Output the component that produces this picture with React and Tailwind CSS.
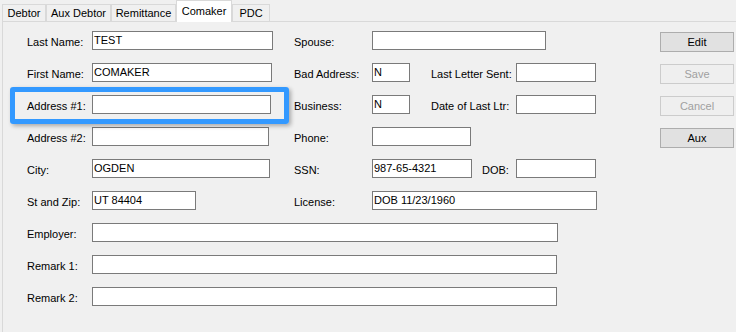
import React from "react";

const TABS = [
  { name: "Debtor", w: "w-[44px]" },
  { name: "Aux Debtor", w: "w-[65px]" },
  { name: "Remittance", w: "w-[65px]" },
  { name: "Comaker", w: "w-[56px]", active: true },
  { name: "PDC", w: "w-[38px]" },
];

// plain winforms-ish textbox
const Box = ({ className = "", value = "" }) => (
  <div
    className={`h-[19px] shrink-0 overflow-hidden whitespace-nowrap border border-[#7a7a7a] bg-white pl-[1px] text-[11px] leading-[17px] text-black ${className}`}
  >
    {value}
  </div>
);

const Label = ({ className = "", children }) => (
  <span className={`shrink-0 whitespace-nowrap leading-[22px] ${className}`}>
    {children}
  </span>
);

const Btn = ({ children, disabled }) => (
  <button
    className={`h-[20px] w-[74px] border text-[11px] leading-[18px] ${
      disabled
        ? "border-[#cccccc] bg-[#efefef] text-[#a0a0a0]"
        : "border-[#adadad] bg-[#e1e1e1] text-black"
    }`}
  >
    {children}
  </button>
);

const App = () => {
  return (
    <div className="relative flex h-[332px] w-[736px] flex-col overflow-hidden bg-[#f0f0f0] font-['Liberation_Sans',Arial,sans-serif] text-[11px] text-black">
      {/* ----- tab strip ----- */}
      <div className="ml-[2px] flex h-[21px] items-end">
        {TABS.map((t) =>
          t.active ? (
            <div
              key={t.name}
              className={`relative z-10 -mb-px flex h-[22px] ${t.w} justify-center border border-b-0 border-[#d9d9d9] bg-white pt-[3px] leading-[14px]`}
            >
              {t.name}
            </div>
          ) : (
            <div
              key={t.name}
              className={`flex h-[17px] ${t.w} items-center justify-center border-l border-t border-r border-[#d9d9d9] bg-[#f0f0f0] pt-[1px]`}
            >
              {t.name}
            </div>
          )
        )}
      </div>

      {/* ----- tab page ----- */}
      <div className="ml-[2px] flex flex-1 justify-between border-l border-t border-[#d9d9d9] bg-[#f0f0f0] pl-[24px] pr-[2px] pt-[9px]">
        <div className="flex flex-col gap-[13px]">
          <div className="flex h-[19px] items-start">
            <div className="flex w-[267px] shrink-0">
              <Label className="w-[65px]">Last Name:</Label>
              <Box className="w-[181px]" value="TEST" />
            </div>
            <Label className="w-[78px]">Spouse:</Label>
            <Box className="w-[174px]" />
          </div>

          <div className="flex h-[19px] items-start">
            <div className="flex w-[267px] shrink-0">
              <Label className="w-[65px]">First Name:</Label>
              <Box className="w-[180px]" value="COMAKER" />
            </div>
            <Label className="w-[78px]">Bad Address:</Label>
            <Box className="w-[38px]" value="N" />
            <Label className="ml-[21px] w-[85px]">Last Letter Sent:</Label>
            <Box className="w-[80px]" />
          </div>

          <div className="flex h-[19px] items-start">
            <div className="flex w-[267px] shrink-0">
              <Label className="w-[65px]">Address #1:</Label>
              <Box className="w-[179px]" />
            </div>
            <Label className="w-[78px]">Business:</Label>
            <Box className="w-[38px]" value="N" />
            <Label className="ml-[21px] w-[85px]">Date of Last Ltr:</Label>
            <Box className="w-[80px]" />
          </div>

          <div className="flex h-[19px] items-start">
            <div className="flex w-[267px] shrink-0">
              <Label className="w-[65px]">Address #2:</Label>
              <Box className="w-[177px]" />
            </div>
            <Label className="w-[78px]">Phone:</Label>
            <Box className="w-[99px]" />
          </div>

          <div className="flex h-[19px] items-start">
            <div className="flex w-[267px] shrink-0">
              <Label className="w-[65px]">City:</Label>
              <Box className="w-[178px]" value="OGDEN" />
            </div>
            <Label className="w-[78px]">SSN:</Label>
            <Box className="w-[100px]" value="987-65-4321" />
            <Label className="ml-[10px] w-[34px]">DOB:</Label>
            <Box className="w-[80px]" />
          </div>

          <div className="flex h-[19px] items-start">
            <div className="flex w-[267px] shrink-0">
              <Label className="w-[65px]">St and Zip:</Label>
              <Box className="w-[104px]" value="UT 84404" />
            </div>
            <Label className="w-[78px]">License:</Label>
            <Box className="w-[225px]" value="DOB 11/23/1960" />
          </div>

          <div className="flex h-[19px] items-start">
            <Label className="w-[65px]">Employer:</Label>
            <Box className="w-[466px]" />
          </div>

          <div className="flex h-[19px] items-start">
            <Label className="w-[65px]">Remark 1:</Label>
            <Box className="w-[465px]" />
          </div>

          <div className="flex h-[19px] items-start">
            <Label className="w-[65px]">Remark 2:</Label>
            <Box className="w-[465px]" />
          </div>
        </div>

        <div className="flex flex-col gap-[12px] pt-[1px]">
          <Btn>Edit</Btn>
          <Btn disabled>Save</Btn>
          <Btn disabled>Cancel</Btn>
          <Btn>Aux</Btn>
        </div>
      </div>

      {/* highlight annotation around Address #1 */}
      <div className="pointer-events-none absolute left-[10px] top-[87px] h-[37px] w-[279px] rounded-[3px] border-[5px] border-[#3399ff] shadow-[2px_2px_4px_rgba(0,0,0,0.3)]" />
    </div>
  );
};

export default App;
